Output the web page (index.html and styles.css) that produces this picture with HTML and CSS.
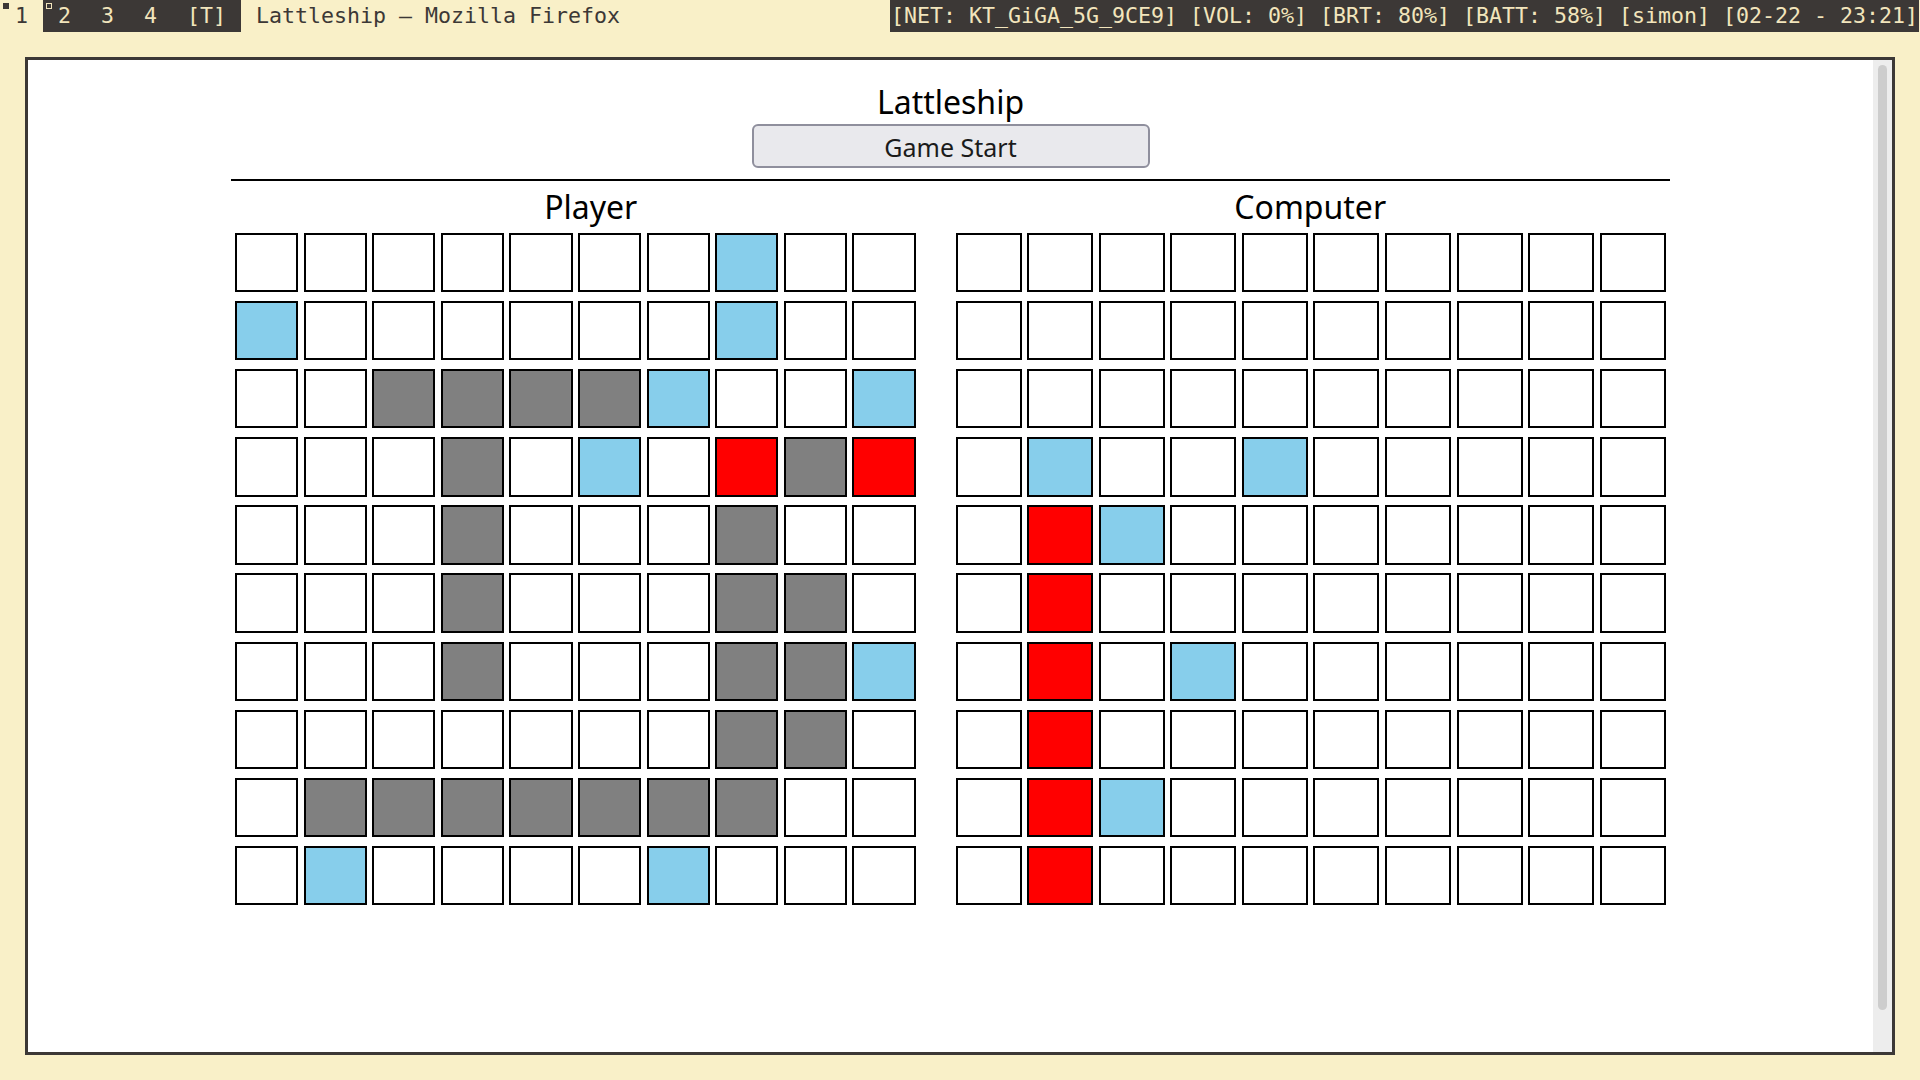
FILE: index.html
```html
<!DOCTYPE html>
<html>
<head>
  <meta charset="utf-8" />
  <title>Lattleship</title>
  <link rel="stylesheet" href="styles.css">
</head>
<body>
  <div class="bar">
    <div class="workspaces">
      <span class="ws ws-mark">1</span>
      <div class="ws-group">
        <span class="ws ws-open">2</span>
        <span class="ws">3</span>
        <span class="ws">4</span>
        <span class="ws">[T]</span>
      </div>
      <span class="win-title">Lattleship — Mozilla Firefox</span>
    </div>
    <div class="status">[NET: KT_GiGA_5G_9CE9] [VOL: 0%] [BRT: 80%] [BATT: 58%] [simon] [02-22 - 23:21]</div>
  </div>

  <div class="window">
    <div class="page">
      <div class="game">
        <h1>Lattleship</h1>
        <button class="start">Game Start</button>
        <hr class="divider" />
        <div class="boards">
          <div class="board">
            <h2>Player</h2>
            <div class="grid player" id="player"></div>
          </div>
          <div class="board">
            <h2>Computer</h2>
            <div class="grid computer" id="computer"></div>
          </div>
        </div>
      </div>
    </div>
    <div class="scrollbar"><div class="thumb"></div></div>
  </div>

  <script>
    // . empty, s miss, g ship, h hit
    var playerBoard = [
      ".......s..",
      "s......s..",
      "..ggggs..s",
      "...g.s.hgh",
      "...g...g..",
      "...g...gg.",
      "...g...ggs",
      ".......gg.",
      ".ggggggg..",
      ".s....s..."
    ];

    var computerBoard = [
      "..........",
      "..........",
      "..........",
      ".s..s.....",
      ".hs.......",
      ".h........",
      ".h.s......",
      ".h........",
      ".hs.......",
      ".h........"
    ];

    function draw(id, board) {
      var grid = document.getElementById(id);
      var html = "";
      for (var r = 0; r < board.length; r++) {
        for (var c = 0; c < board[r].length; c++) {
          var k = board[r].charAt(c);
          html += '<div class="cell' + (k == "." ? "" : " " + k) + '"></div>';
        }
      }
      grid.innerHTML = html;
    }

    draw("player", playerBoard);
    draw("computer", computerBoard);
  </script>
</body>
</html>
```

FILE: styles.css
```css
body {
  margin: 0;
  height: 1080px;
  overflow: hidden;
  background-color: #f9f0c8;
  font-family: "Noto Sans", sans-serif;
}

/* top bar */
.bar {
  display: flex;
  justify-content: space-between;
  height: 32px;
  line-height: 32px;
  font-family: "DejaVu Sans Mono", monospace;
  font-size: 21.6px;
  color: #3c3836;
  white-space: pre;
}

.workspaces {
  display: flex;
}

.ws {
  position: relative;
  padding: 0 15px;
}

.ws-group {
  display: flex;
  background-color: #3c3836;
  color: #f2e5bc;
}

.ws-mark::before,
.ws-open::before {
  content: "";
  position: absolute;
  left: 3px;
  top: 3px;
  width: 6px;
  height: 6px;
  box-sizing: border-box;
}

.ws-mark::before {
  background-color: #3c3836;
}

.ws-open::before {
  border: 1px solid #f2e5bc;
}

.win-title {
  margin-left: 15px;
}

.status {
  background-color: #3c3836;
  color: #f2e5bc;
  padding: 0 1px;
  margin-right: 1px;
}

/* browser window */
.window {
  display: flex;
  width: 1870px;
  height: 998px;
  margin: 25px 0 0 25px;
  border: 3px solid #3c3836;
  box-sizing: border-box;
  background-color: #fff;
}

.page {
  flex: 1;
}

.scrollbar {
  width: 19px;
  padding: 5px 5px 0 5px;
  box-sizing: border-box;
  background-color: #ededed;
}

.scrollbar .thumb {
  height: 945px;
  border-radius: 5px;
  background-color: #cdcdcd;
}

/* game */
.game {
  width: 1439px;
  margin-left: 203px;
}

h1 {
  margin: 22px 0 0 0;
  font-size: 32px;
  font-weight: normal;
  line-height: 40px;
  text-align: center;
  color: #000;
}

.start {
  display: block;
  width: 398px;
  height: 44px;
  margin: 2px auto 0 auto;
  padding: 1px 0 0 0;
  font-family: "Noto Sans", sans-serif;
  font-size: 25px;
  color: #1b1b1b;
  background-color: #e9e9ed;
  border: 2px solid #8f8f9d;
  border-radius: 6px;
}

.divider {
  height: 2px;
  margin: 11px 0 0 0;
  border: none;
  background-color: #000;
}

.boards {
  display: grid;
  grid-template-columns: 1fr 1fr;
}

h2 {
  margin: 6px 0 0 0;
  font-size: 32px;
  font-weight: normal;
  line-height: 40px;
  text-align: center;
  color: #000;
}

.grid {
  display: grid;
  grid-auto-rows: 59.3px;
  row-gap: 8.8px;
  margin-top: 6px;
}

.grid.player {
  grid-template-columns: repeat(10, 63.3px);
  column-gap: 5.3px;
  margin-left: 4px;
}

.grid.computer {
  grid-template-columns: repeat(10, 66px);
  column-gap: 5.6px;
  margin-left: 5px;
}

.cell {
  border: 2px solid #000;
  box-sizing: border-box;
  background-color: #fff;
}

.cell.s {
  background-color: #87ceeb;
}

.cell.g {
  background-color: #808080;
}

.cell.h {
  background-color: #ff0000;
}
```
